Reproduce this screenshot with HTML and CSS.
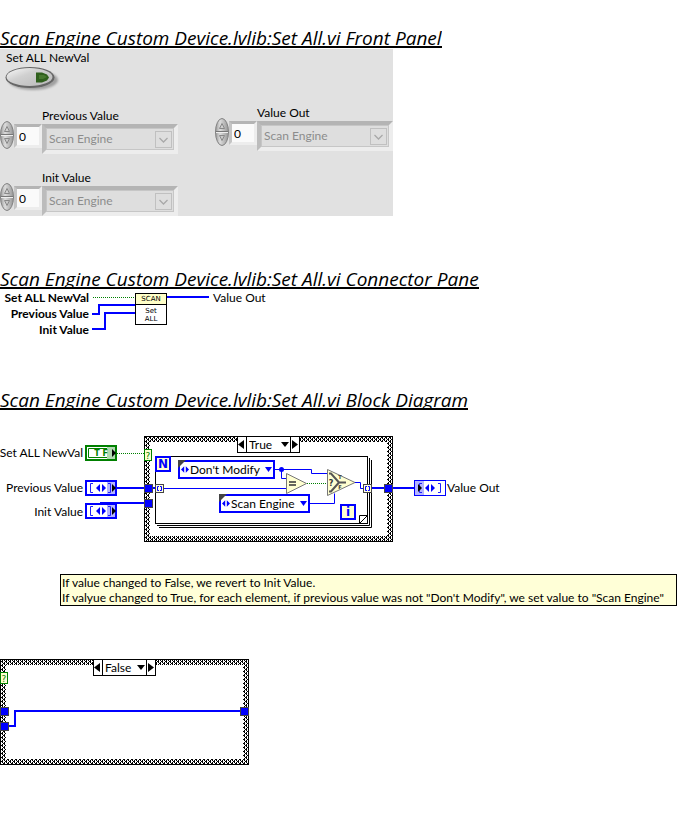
FILE: index.html
```html
<!DOCTYPE html>
<html lang="en">
<head>
<meta charset="utf-8">
<title>Scan Engine Custom Device.lvlib:Set All.vi</title>
<link rel="stylesheet" href="styles.css">
</head>
<body>
<svg class="defs" width="0" height="0" aria-hidden="true">
  <defs>
    <pattern id="weave" width="4" height="4" patternUnits="userSpaceOnUse">
      <path fill="#000" d="M0 0h1v1h-1zM2 0h1v1h-1zM1 1h2v1h-2zM0 2h1v1h-1zM2 2h1v1h-1zM0 3h1v1h-1zM3 3h1v1h-1z"/>
    </pattern>
    <linearGradient id="metal" x1="0" y1="0" x2="1" y2="0">
      <stop offset="0" stop-color="#9a9a9a"/><stop offset=".35" stop-color="#dcdcdc"/><stop offset="1" stop-color="#969696"/>
    </linearGradient>
    <linearGradient id="face" x1="0" y1="0" x2="1" y2="1">
      <stop offset="0" stop-color="#fafafa"/><stop offset=".4" stop-color="#d0d0d0"/><stop offset="1" stop-color="#b8b8b8"/>
    </linearGradient>
    <filter id="soft"><feGaussianBlur stdDeviation="1.2"/></filter>
    <symbol id="knob" viewBox="0 0 14 28">
      <ellipse cx="7" cy="14" rx="6.5" ry="13.5" fill="url(#metal)" stroke="#808080"/>
      <path d="M1 13.5h12" stroke="#777"/><path d="M1 14.5h12" stroke="#eee"/>
      <path d="M4.500 10.500l2.500-5 2.500 5z" fill="#d0d0d0" stroke="#888"/><path d="M4.500 17.500l2.500 5 2.500-5z" fill="#c8c8c8" stroke="#888"/>
    </symbol>
    <symbol id="chev" viewBox="0 0 17 17">
      <rect x=".5" y=".5" width="16" height="16" fill="#dedede" stroke="#c0c0c0"/>
      <path d="M4.500 7l4 4 4-4" fill="none" stroke="#a8a8a8" stroke-width="1.300"/>
    </symbol>
    <symbol id="tunnel" viewBox="0 0 9 9"><rect x=".5" y=".5" width="8" height="8" fill="#00f" stroke="#444"/></symbol>
    <symbol id="index" viewBox="0 0 9 9">
      <rect x=".5" y=".5" width="8" height="8" fill="#ffffe0" stroke="#444"/>
      <path d="M4 2.500H2.500v4H4M5 2.500h1.500v4H5" fill="none" stroke="#00f"/>
    </symbol>
    <symbol id="arrows" viewBox="0 0 10 8"><path fill="#00f" d="M4 0v8L0 4zM6 0v8l4-4z"/></symbol>
    <symbol id="array" viewBox="0 0 32 16">
      <rect x="1" y="1" width="30" height="14" fill="#fff" stroke="#00f" stroke-width="2"/>
      <rect x="22" y="2" width="8" height="12" fill="#b4b4ff"/>
      <path d="M8 3.500H5.500v9H8M23 3.500h2.500v9H23" fill="none" stroke="#2020ff"/>
      <path fill="#00f" d="M15 4v8l-4-4zM17 4v8l4-4z"/><path d="M27 4v8l4-4z"/>
    </symbol>
  </defs>
</svg>
<main class="doc">
  <section class="front">
    <h2>Scan Engine Custom Device.lvlib:Set All.vi Front Panel</h2>
    <div class="panel">
      <div class="col">
        <div class="toggle">
          <label for="setall">Set ALL NewVal</label>
          <button id="setall" type="button" aria-pressed="false">
            <svg width="56" height="28" viewBox="0 0 56 28" aria-hidden="true">
              <ellipse cx="28" cy="14" rx="25" ry="10" fill="#a0a0a0" filter="url(#soft)"/>
              <ellipse cx="25" cy="11.500" rx="24.500" ry="10.500" fill="#666"/>
              <ellipse cx="24.500" cy="11" rx="23" ry="9" fill="url(#face)"/>
              <path d="M31 6.500h6l5 2 2 3-2 3-5 2h-6z" fill="#2f5f1c"/><path d="M34 9h5l3 2-4 2h-4z" fill="#47782f"/>
            </svg>
          </button>
        </div>
        <div class="array">
          <label for="prev">Previous Value</label>
          <div class="row">
            <svg class="knob" aria-hidden="true"><use href="#knob"/></svg>
            <input type="text" value="0" aria-label="Previous Value index">
            <div class="ring"><select id="prev" disabled><option>Scan Engine</option></select><svg aria-hidden="true"><use href="#chev"/></svg></div>
          </div>
        </div>
        <div class="array">
          <label for="init">Init Value</label>
          <div class="row">
            <svg class="knob" aria-hidden="true"><use href="#knob"/></svg>
            <input type="text" value="0" aria-label="Init Value index">
            <div class="ring"><select id="init" disabled><option>Scan Engine</option></select><svg aria-hidden="true"><use href="#chev"/></svg></div>
          </div>
        </div>
      </div>
      <div class="col out">
        <div class="array">
          <label for="out">Value Out</label>
          <div class="row">
            <svg class="knob" aria-hidden="true"><use href="#knob"/></svg>
            <input type="text" value="0" aria-label="Value Out index">
            <div class="ring"><select id="out" disabled><option>Scan Engine</option></select><svg aria-hidden="true"><use href="#chev"/></svg></div>
          </div>
        </div>
      </div>
    </div>
  </section>

  <section class="connector">
    <h2>Scan Engine Custom Device.lvlib:Set All.vi Connector Pane</h2>
    <svg class="drawing" width="280" height="50" viewBox="0 290 280 50">
      <g class="strong end"><text x="89" y="302">Set ALL NewVal</text><text x="89" y="318">Previous Value</text><text x="89" y="334">Init Value</text></g>
      <path class="bool" d="M93 297.500h42"/>
      <path class="wire thick" d="M92 314h7v-9h36M92 329h13v-16h30M167 297h42"/>
      <rect x="135.500" y="293.500" width="31" height="31" fill="#fff" stroke="#000"/>
      <rect x="136" y="294" width="30" height="10" fill="#ffffc8"/>
      <path d="M135 304.500h32" stroke="#000"/>
      <g class="tiny"><text x="151" y="301">SCAN</text><text x="151" y="313">Set</text><text x="151" y="321">ALL</text></g>
      <text x="213" y="302">Value Out</text>
    </svg>
  </section>

  <section class="block">
    <h2>Scan Engine Custom Device.lvlib:Set All.vi Block Diagram</h2>
    <div class="canvas">
      <svg class="drawing" width="510" height="106" viewBox="0 436 510 106">
        <g class="end"><text x="83" y="457">Set ALL NewVal</text><text x="83" y="492">Previous Value</text><text x="83" y="516">Init Value</text></g>
        <rect x="144.500" y="436.500" width="248" height="105" fill="url(#weave)" stroke="#000"/>
        <rect x="150" y="442" width="237" height="94" fill="#fff"/>
        <path d="M159 527.500h212.500V460M157 525.500h212.500V458" fill="none" stroke="#000"/>
        <rect x="155.500" y="456.500" width="212" height="67" fill="#fff" stroke="#000"/>
        <path d="M359.500 523.500v-8h8" fill="none" stroke="#000"/><path d="M359.500 523.500l8-8" stroke="#000"/>
        <path class="bool" d="M117 453.500h27M307 483.500h21"/>
        <path class="wire thick" d="M117 488h28M100 503h45M153 488h3M372 488h13M393 488h21"/>
        <path class="wire" d="M163 488.500h124M275 469.500h36.500v4H328M281.500 469.500v9h6M310 503.500h24.500v-10M355 482.500h5.500v6h3"/>
        <circle cx="281.500" cy="469.500" r="2.500" fill="#00f"/>
        <rect x="86" y="446" width="30" height="14" fill="#fff" stroke="#008000" stroke-width="2"/>
        <path d="M107 448.500H88.500v9H107" fill="none" stroke="#008000"/>
        <rect x="107" y="447" width="8" height="12" fill="#b0d8b0"/>
        <text class="mark tf" x="101" y="456">T F</text><path d="M112 449v8l4-4z"/>
        <use href="#array" x="85" y="480" width="32" height="16"/>
        <use href="#array" x="85" y="503" width="32" height="16"/>
        <rect x="144.500" y="449.500" width="7" height="11" fill="#ffffd0" stroke="#008000"/><text class="mark query" x="148" y="459">?</text>
        <use href="#tunnel" x="144" y="484" width="9" height="9"/>
        <use href="#tunnel" x="144" y="499" width="9" height="9"/>
        <use href="#tunnel" x="384" y="484" width="9" height="9"/>
        <use href="#index" x="155" y="484" width="9" height="9"/>
        <use href="#index" x="363" y="484" width="9" height="9"/>
        <rect x="156" y="457" width="14" height="14" fill="#ffffd0" stroke="#00f" stroke-width="2"/>
        <text class="mark count" x="163" y="468">N</text>
        <rect x="341" y="505" width="14" height="14" fill="#ffffd0" stroke="#00f" stroke-width="2"/>
        <text class="mark count" x="348" y="516">i</text>
        <path d="M286.500 473.500v20l20-10z" fill="#ffffd0" stroke="#777"/>
        <path d="M289 482h7M289 485h7" stroke="#333" stroke-width="1.500"/>
        <path d="M327.500 469.500v26l27.500-13z" fill="#ffffd0" stroke="#777"/>
        <path d="M329 473.500h2l8 9h7M329 491.500h2l8-9" fill="none" stroke="#555" stroke-width="2"/>
        <text class="mark pick" x="331" y="486">?</text><text class="mark branch" x="340" y="479">T</text><text class="mark branch" x="340" y="489">F</text>
        <rect x="414.500" y="480.500" width="31" height="15" fill="#fff" stroke="#00f"/><rect x="415" y="481" width="9" height="14" fill="#b4b4ff"/>
        <path d="M422 483.500h-2.500v9h2.500M438 483.500h2.500v9H438" fill="none" stroke="#2020ff"/><path d="M429 484v8l-4-4zM431 484v8l4-4z" fill="#00f"/><path d="M418 484v8l4-4z"/>
        <text x="447" y="492">Value Out</text>
      </svg>
      <div class="case true-case"><button type="button" aria-label="Previous case"><svg width="7" height="9"><path d="M6 0v9L0 4.500z"/></svg></button><select aria-label="Case"><option>True</option><option>False</option></select><svg width="9" height="5"><path d="M0 0h8L4 5z"/></svg><button type="button" aria-label="Next case"><svg width="7" height="9"><path d="M1 0v9l6-4.500z"/></svg></button></div>
      <div class="enum modify"><svg class="corner" width="8" height="8"><path d="M0 0h8L0 8z"/></svg><svg width="8" height="7"><use href="#arrows" width="8" height="7"/></svg><select aria-label="Compared value"><option>Don't Modify</option></select><svg width="7" height="5"><path d="M0 0h7L3.500 5z"/></svg></div>
      <div class="enum engine"><svg class="corner" width="8" height="8"><path d="M0 0h8L0 8z"/></svg><svg width="8" height="7"><use href="#arrows" width="8" height="7"/></svg><select aria-label="Assigned value"><option>Scan Engine</option></select><svg width="7" height="5"><path d="M0 0h7L3.500 5z"/></svg></div>
    </div>
    <p class="note">If value changed to False, we revert to Init Value.<br>If valyue changed to True, for each element, if previous value was not "Don't Modify", we set value to "Scan Engine"</p>
    <div class="canvas">
      <svg class="drawing" width="249" height="106" viewBox="0 659 249 106">
        <rect x=".5" y="659.500" width="248" height="105" fill="url(#weave)" stroke="#000"/>
        <rect x="6" y="665" width="237" height="94" fill="#fff"/>
        <path class="wire thick" d="M9 726h6v-15h226"/>
        <rect x=".5" y="672.500" width="7" height="11" fill="#ffffd0" stroke="#008000"/><text class="mark query" x="4" y="682">?</text>
        <use href="#tunnel" x="0" y="707" width="9" height="9"/>
        <use href="#tunnel" x="0" y="722" width="9" height="9"/>
        <use href="#tunnel" x="240" y="707" width="9" height="9"/>
      </svg>
      <div class="case false-case"><button type="button" aria-label="Previous case"><svg width="7" height="9"><path d="M6 0v9L0 4.500z"/></svg></button><select aria-label="Case"><option>False</option><option>True</option></select><svg width="9" height="5"><path d="M0 0h8L4 5z"/></svg><button type="button" aria-label="Next case"><svg width="7" height="9"><path d="M1 0v9l6-4.500z"/></svg></button></div>
    </div>
  </section>
</main>
</body>
</html>
```
FILE: styles.css
```css
* { box-sizing: border-box; }
body { margin: 0; background: #fff; color: #000; font: 12px/16px Lato, sans-serif; }
svg { display: block; flex: none; }
.defs { position: absolute; }
.doc { padding-top: 27px; }
h2 { width: fit-content; margin: 0 0 1px; height: 21px; overflow: hidden; border-bottom: 2px solid #000; font: italic 400 19px/22px "Open Sans", sans-serif; white-space: nowrap; }
button, select, input { font: inherit; color: inherit; margin: 0; padding: 0; border: 0; background: none; border-radius: 0; }
select { appearance: none; min-width: 0; opacity: 1; }

.panel { display: flex; width: fit-content; background: #e1e1e1; }
.front { margin-bottom: 52px; }
.col { width: 215px; }
.col.out { width: 178px; padding-top: 56px; }
.toggle { height: 59px; padding: 1px 5px 0; }
.toggle label { display: block; height: 16px; padding-left: 1px; }
.toggle button { display: block; }
.array { height: 62px; }
.array:last-child { height: 46px; }
.array label { display: block; padding-left: 42px; }
.row { display: flex; align-items: flex-start; }
.knob { width: 14px; height: 28px; margin-top: -3px; }
.row input { width: 28px; height: 24px; padding-left: 2px; background: #fafafa; border: 3px solid; border-color: #b4b4b4 #ededed #ededed #c4c4c4; }
.ring { display: flex; align-items: center; width: 136px; height: 30px; padding: 0 2px 0 3px; color: #8c8c8c; background: #dedede; border: 4px solid; border-color: #b4b4b4 #ededed #ededed #bcbcbc; box-shadow: inset 0 0 0 1px #c6c6c6; }
.ring select { flex: 1; }
.ring svg { width: 17px; height: 17px; }

.connector { margin-bottom: 49px; }
.drawing text { font: 12px Lato, sans-serif; }
.drawing .strong text { font-weight: 700; }
.drawing .end text { text-anchor: end; }
.drawing .tiny text { font: 7px "DejaVu Sans", sans-serif; text-anchor: middle; }
.drawing .mark { font: 700 9px "DejaVu Sans", sans-serif; text-anchor: middle; fill: #008000; }
.drawing .tf { font-size: 8px; }
.drawing .query { font-weight: 400; }
.drawing .count { font-size: 12px; fill: #00f; }
.drawing .pick { font-size: 8px; fill: #333; }
.drawing .branch { font-size: 5px; fill: #333; }
.wire { fill: none; stroke: #00f; }
.thick { stroke-width: 2; }
.bool { fill: none; stroke: #008000; stroke-dasharray: 1 1; }

.canvas { position: relative; }
.block h2 { margin-bottom: 26px; }
.case { position: absolute; top: 0; display: flex; align-items: center; width: 63px; height: 17px; background: #fff; border: 1px solid #000; }
.case button { display: flex; align-items: center; width: 9px; height: 15px; }
.case button:first-child { border-right: 1px solid #000; }
.case button:last-child { border-left: 1px solid #000; }
.case select { flex: 1; padding-left: 2px; }
.true-case { left: 237px; }
.false-case { left: 93px; }
.enum { position: absolute; display: flex; align-items: center; gap: 1px; height: 19px; padding: 0 1px; background: #fff; border: 2px solid #00f; fill: #00f; }
.enum select { flex: 1; }
.enum .corner { position: absolute; left: -2px; top: -2px; fill: #444; }
.modify { left: 178px; top: 24px; width: 97px; }
.engine { left: 219px; top: 58px; width: 91px; }
.note { margin: 32px 13px 53px 60px; padding: 0 1px; background: #ffffd7; border: 1px solid #000; line-height: 15px; white-space: nowrap; }
```
